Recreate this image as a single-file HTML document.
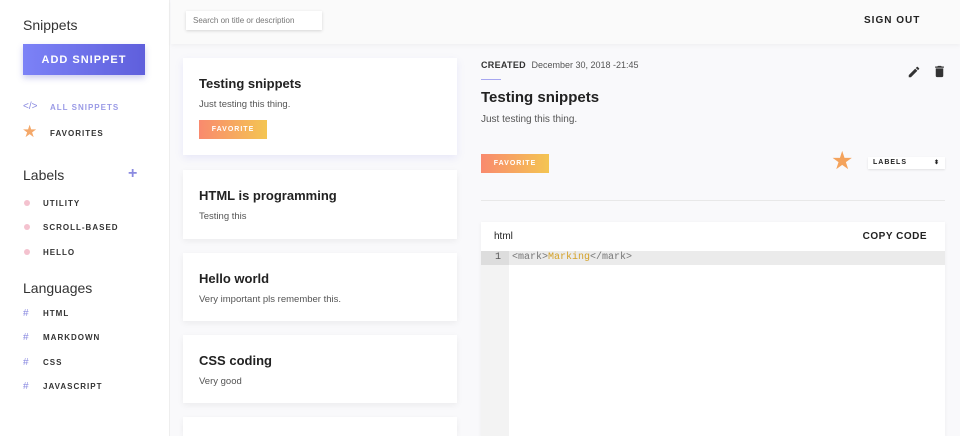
<!DOCTYPE html>
<html style="width:960px;height:436px;overflow:hidden"><head><style>
*{box-sizing:border-box;margin:0;padding:0}
body{width:960px;height:436px;overflow:hidden;background:#f9f9fb;font-family:"Liberation Sans",sans-serif;color:#222;position:relative}
.side{position:absolute;left:0;top:0;width:170px;height:436px;background:#fff;border-right:1px solid #eee}
.h{position:absolute;left:23px;font-size:14px;color:#333}
.add{position:absolute;left:23px;top:44px;width:122px;height:31px;background:linear-gradient(90deg,#7c82f7,#5f5fdc);color:#fff;font-size:11px;font-weight:bold;letter-spacing:1px;text-align:center;line-height:32px;box-shadow:0 3px 6px rgba(90,90,200,.3)}
.it{position:absolute;left:43px;font-size:8px;font-weight:bold;letter-spacing:1px;color:#333}
.ic{position:absolute;left:23px;font-size:10px}
.dot{position:absolute;left:24px;width:6px;height:6px;border-radius:50%;background:#f4c2cf}
.hash{position:absolute;left:23px;font-size:10px;color:#8a8ae0}
.top{position:absolute;left:171px;top:0;right:0;height:44px;background:#fafafa;box-shadow:0 2px 4px rgba(0,0,0,.04)}
.search{position:absolute;left:186px;top:11px;width:136px;height:19px;background:#fff;box-shadow:0 1px 3px rgba(0,0,0,.15);font-size:8px;color:#777;padding:5px 7px}
.so{position:absolute;left:864px;top:15px;font-size:10px;font-weight:bold;letter-spacing:1px}
.card{position:absolute;left:183px;width:274px;background:#fff;box-shadow:0 2px 6px rgba(0,0,0,.06);padding:0 16px}
.card b{display:block;font-size:13px;color:#222;margin-top:18px}
.card p{font-size:9.5px;color:#555;margin-top:8px}
.fav{background:linear-gradient(90deg,#f98a6e,#f4c552);color:#fff;font-size:7px;letter-spacing:1px;text-align:center;font-weight:bold}
</style></head><body>
<div class="side">
<div class="h" style="top:17px">Snippets</div>
<div class="add">ADD SNIPPET</div>
<div class="ic" style="top:101px;color:#8a8ae0">&lt;/&gt;</div><div class="it" style="top:103px;left:50px;color:#9a9ae6">ALL SNIPPETS</div>
<div class="ic" style="top:122px;left:22px;color:#f4a86a;font-size:17px">★</div><div class="it" style="top:129px;left:50px">FAVORITES</div>
<div class="h" style="top:167px">Labels</div><div style="position:absolute;left:128px;top:165px;color:#8a8ae0;font-size:16px;font-weight:bold">+</div>
<div class="dot" style="top:200px"></div><div class="it" style="top:199px">UTILITY</div>
<div class="dot" style="top:224px"></div><div class="it" style="top:223px">SCROLL-BASED</div>
<div class="dot" style="top:249px"></div><div class="it" style="top:248px">HELLO</div>
<div class="h" style="top:280px">Languages</div>
<div class="hash" style="top:308px">#</div><div class="it" style="top:309px">HTML</div>
<div class="hash" style="top:332px">#</div><div class="it" style="top:333px">MARKDOWN</div>
<div class="hash" style="top:357px">#</div><div class="it" style="top:358px">CSS</div>
<div class="hash" style="top:381px">#</div><div class="it" style="top:382px">JAVASCRIPT</div>
</div>
<div class="top"></div>
<div class="search">Search on title or description</div>
<div class="so">SIGN OUT</div>
<div class="card" style="top:58px;height:97px;box-shadow:0 3px 8px rgba(110,110,230,.12)"><b>Testing snippets</b><p>Just testing this thing.</p><div class="fav" style="width:68px;height:19px;line-height:19px;margin-top:10px">FAVORITE</div></div>
<div class="card" style="top:170px;height:69px"><b>HTML is programming</b><p>Testing this</p></div>
<div class="card" style="top:253px;height:68px"><b>Hello world</b><p>Very important pls remember this.</p></div>
<div class="card" style="top:335px;height:68px"><b>CSS coding</b><p>Very good</p></div>
<div class="card" style="top:417px;height:19px"></div>
<div style="position:absolute;left:481px;top:60px;font-size:9px"><b style="color:#333;letter-spacing:.3px">CREATED</b> <span style="color:#555;margin-left:3px">December 30, 2018 -21:45</span></div>
<div style="position:absolute;left:481px;top:79px;width:20px;height:1px;background:#a6a6f0"></div>
<div style="position:absolute;left:481px;top:89px;font-size:15px;font-weight:bold;color:#222">Testing snippets</div>
<div style="position:absolute;left:481px;top:114px;font-size:10px;color:#555">Just testing this thing.</div>
<svg style="position:absolute;left:907px;top:65px" width="14" height="14" viewBox="0 0 24 24"><path fill="#333" d="M3 17.25V21h3.75L17.8 9.94l-3.75-3.75L3 17.25zM20.7 7.04a1 1 0 000-1.41l-2.34-2.34a1 1 0 00-1.41 0l-1.83 1.83 3.75 3.75 1.83-1.83z"/></svg>
<svg style="position:absolute;left:932px;top:64px" width="15" height="15" viewBox="0 0 24 24"><path fill="#333" d="M6 19c0 1.1.9 2 2 2h8c1.1 0 2-.9 2-2V7H6v12zM19 4h-3.5l-1-1h-5l-1 1H5v2h14V4z"/></svg>
<div class="fav" style="position:absolute;left:481px;top:154px;width:68px;height:19px;line-height:19px">FAVORITE</div>
<div style="position:absolute;left:831px;top:146px;font-size:25px;color:#f4a35c">★</div>
<div style="position:absolute;left:868px;top:157px;width:77px;height:12px;background:#fff;box-shadow:0 1px 2px rgba(0,0,0,.1);font-size:7px;font-weight:bold;letter-spacing:1px;padding:2px 5px">LABELS<span style="float:right;font-size:6px">⬍</span></div>
<div style="position:absolute;left:481px;top:200px;width:464px;height:1px;background:#e8e8e8"></div>
<div style="position:absolute;left:481px;top:222px;width:464px;height:214px;background:#fff;box-shadow:0 1px 4px rgba(0,0,0,.06);overflow:hidden">
<div style="position:absolute;left:13px;top:9px;font-size:10px">html</div>
<div style="position:absolute;right:18px;top:9px;font-size:10px;font-weight:bold;letter-spacing:.5px">COPY CODE</div>
<div style="position:absolute;left:0;top:29px;width:28px;height:190px;background:#f3f3f3"></div>
<div style="position:absolute;left:0;top:29px;width:464px;height:14px;background:#ebebeb;font-family:'Liberation Mono',monospace;font-size:10px;line-height:14px"><span style="display:inline-block;width:28px;background:#ddd;text-align:right;padding-right:8px;color:#555">1</span><span style="padding-left:3px;color:#777">&lt;mark&gt;</span><span style="color:#d4a22a">Marking</span><span style="color:#777">&lt;/mark&gt;</span></div>
</div>
</body></html>
